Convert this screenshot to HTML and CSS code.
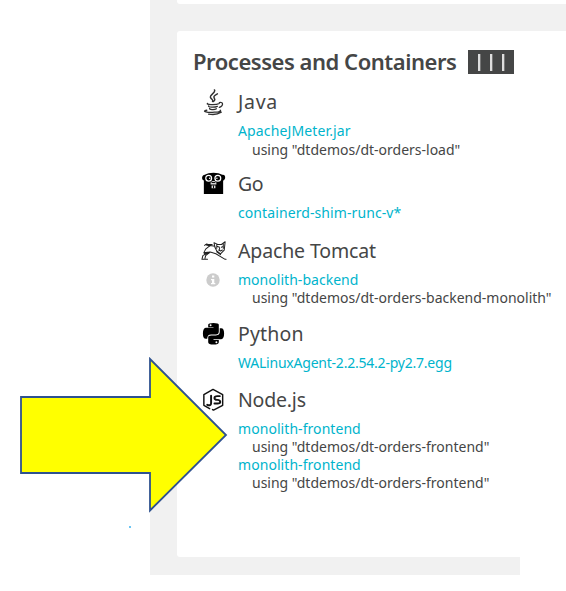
FILE: index.html
```html
<!DOCTYPE html>
<html lang="en">
<head>
<meta charset="utf-8">
<title>Processes and Containers</title>
<link rel="stylesheet" href="styles.css">
</head>
<body>
<main class="page">
  <div class="previous"></div>
  <section class="card">
    <header class="title"><h1>Processes and Containers</h1><div class="bars"><i></i><i></i><i></i></div></header>
    <div class="groups">
      <article class="group">
        <svg class="icon" viewBox="0 0 28 28" fill="none" stroke="#303030" stroke-linecap="round"><path stroke-width="1.5" d="M15 1c2 3-6 5-4 8 1 2 3 2 2 4M18 5c-4 2-4 3-3 5 1 1 0 2-1 3"/><path stroke-width="1.3" d="M8 15c-3 1 8 2 12 0M9 17.500c-1 1.500 6 2 9 .5M10 20c-1 1.500 5 2 7 .5M20 14c5-1 4 4 0 5"/><path stroke-width="1.4" d="M7 22c-6 1 1 3 8 2 5 0 7-1 6-2M9 26c5 1 10 0 13-2"/></svg>
        <div><h2 class="java">Java</h2><ul><li class="link l1">ApacheJMeter.jar</li><li class="using u1">using "dtdemos/dt-orders-load"</li></ul></div>
      </article>
      <article class="group">
        <svg class="icon" viewBox="0 0 28 28"><path fill="#000" d="M4 25V11C1 10 2 5 5 5c4-3 14-3 18 0 4-1 4 5 1 6v14z"/><circle cx="9" cy="8.500" r="3" stroke="#fff" stroke-width="1.300"/><circle cx="18.500" cy="8.500" r="3" stroke="#fff" stroke-width="1.300"/><circle cx="10" cy="8.500" r=".8" fill="#fff"/><circle cx="17.500" cy="8.500" r=".8" fill="#fff"/><path fill="#ddd" d="M11 13q3-3 6 0v2h-6zM12 16h4v3h-4z"/><path stroke="#000" d="M12 13h4M14 16v3"/></svg>
        <div><h2 class="go">Go</h2><ul><li class="link l2">containerd-shim-runc-v*</li></ul></div>
      </article>
      <article class="group">
        <svg class="icon tomcat-icon" viewBox="0 0 28 28" fill="none" stroke="#222" stroke-width="1.100" stroke-linecap="round" stroke-linejoin="round"><path d="M14 5l4 2 4 0 4-3-1 9-4 4-4-3-2-4zM17 9l3 1M22 10l2-1M19 13l2 1 2-1M20 11v1M15 9l-5-1-5 4-2 4 6-1M12 7H5l-1 1M9 15l-7 4-1 4 2 0M10 15l-5 4-1 4 3 0M10 15l6 2 10 6 1 0M17 15l4 3M17 7v4M24 6v5"/><path stroke-width="2" d="M6 7l3 1M4 17l4-1"/></svg>
        <div><h2 class="tomcat">Apache Tomcat</h2><ul><li class="link l3"><svg class="info" viewBox="0 0 14 14"><circle cx="7" cy="7" r="6.700" fill="#ccc"/><path fill="#fff" d="M6 2.500h2.300v2H6zM5 6h3.300v4h1v1.300H5V10h1V7.200H5z"/></svg>monolith-backend</li><li class="using u2">using "dtdemos/dt-orders-backend-monolith"</li></ul></div>
      </article>
      <article class="group">
        <svg class="icon" viewBox="0 0 28 28"><path d="M8.500 8V5q0-2 5.500-2t5.500 2v7q0 3-3 3h-5q-4 0-4 4.500H6q-3 0-3-5.500t3-6h8V7.500H8.500zM20.500 8.500H22q3 0 3 5.500t-3 6h-8v.8h5.500V23q0 2.500-5.500 2.500T8.500 23v-5q0-2 3-2h5q4 0 4-4z"/><circle cx="11" cy="5.500" r="1" fill="#fff"/><circle cx="17" cy="23" r="1" fill="#fff"/></svg>
        <div><h2 class="python">Python</h2><ul><li class="link l4">WALinuxAgent-2.2.54.2-py2.7.egg</li></ul></div>
      </article>
      <article class="group">
        <svg class="icon" viewBox="0 0 28 28" fill="none" stroke="#111" stroke-linejoin="round" stroke-linecap="round"><path stroke-width="1.500" d="M10 23.500l-6-3.500V9l9.500-5.500L23.500 9v11l-9.500 5-1-.5"/><path stroke-width="2" d="M11.500 10v8q0 3-4 1.500M20.500 10.500h-2.500q-3 0-3 1.900t3 2q3 .3 3 2.100t-3 1.700h-3"/></svg>
        <div><h2 class="node">Node.js</h2><ul><li class="link l5">monolith-frontend</li><li class="using u3">using "dtdemos/dt-orders-frontend"</li><li class="link l5">monolith-frontend</li><li class="using u3">using "dtdemos/dt-orders-frontend"</li></ul></div>
      </article>
    </div>
  </section>
  <div class="footer-band"></div>
</main>
<svg class="arrow" viewBox="0 0 210 158"><path d="M2 41H131V3L207 79l-76 75.500V117H2z" fill="#ff0" stroke="#2f528f" stroke-width="1.800"/></svg>
<span class="dot"></span>
</body>
</html>
```
FILE: styles.css
```css
* { box-sizing: border-box; }
body { margin: 0; width: 566px; height: 591px; overflow: hidden; background: #fff; color: #454646; font-family: "Noto Sans", sans-serif; }
.page { margin-left: 150px; height: 575px; display: grid; grid-template-rows: 4px 27px 526px 18px; background: linear-gradient(#f1f1f1, #f1f1f1) 0 0 / 100% 557px no-repeat; }
.previous { margin-left: 27px; background: #fff; border-radius: 0 0 0 3px; }
.card { grid-row: 3; margin-left: 26.5px; background: #fff; border-radius: 3px 0 0 3px; padding: 15px 0 0 16.5px; }
.title { display: flex; height: 32px; align-items: center; }
h1 { position: relative; top: -1.5px; margin: 0; width: 275px; white-space: nowrap; font-size: 22px; line-height: 32px; font-weight: 600; letter-spacing: -.47px; }
.bars { width: 46px; height: 24px; background: #454646; display: flex; justify-content: center; gap: 9px; align-items: center; }
.bars i { width: 3px; height: 17px; background: #ddd; border: solid #777; border-width: 0 1px 0 0; }
.groups { display: grid; grid-template-rows: 81.5px 67px 83px 66px 120px; padding-top: 10px; }
.group { display: grid; grid-template-columns: 45px 1fr; }
.icon { width: 27px; height: 27px; margin: .5px 0 0 6.5px; }
.tomcat-icon { width: 28px; height: 26px; margin-top: 1px; }
h2 { margin: 0 0 6.4px; font-size: 19.5px; line-height: 28px; font-weight: 400; }
.java { letter-spacing: .7px; }
.go { letter-spacing: -.4px; }
.tomcat { letter-spacing: -.14px; }
.python { letter-spacing: .15px; }
.node { letter-spacing: -.2px; }
ul { margin: 0; padding: 0; list-style: none; }
li { position: relative; height: 18.2px; line-height: 18.2px; font-size: 14px; white-space: nowrap; }
.link { color: #00b4cc; }
.l1 { letter-spacing: .13px; }
.l2 { letter-spacing: .09px; }
.l3 { letter-spacing: .03px; }
.l4 { letter-spacing: -.22px; }
.l5 { letter-spacing: .06px; }
.using { padding-left: 14px; }
.info { position: absolute; left: -32px; top: 2px; width: 14px; height: 14px; }
.arrow { position: absolute; left: 19px; top: 356px; width: 210px; height: 158px; }
.dot { position: absolute; left: 129px; top: 526px; width: 2px; height: 2px; background: #6cc5f3; }
.footer-band { grid-row: 4; width: 370px; background: #f1f1f1; }
```
